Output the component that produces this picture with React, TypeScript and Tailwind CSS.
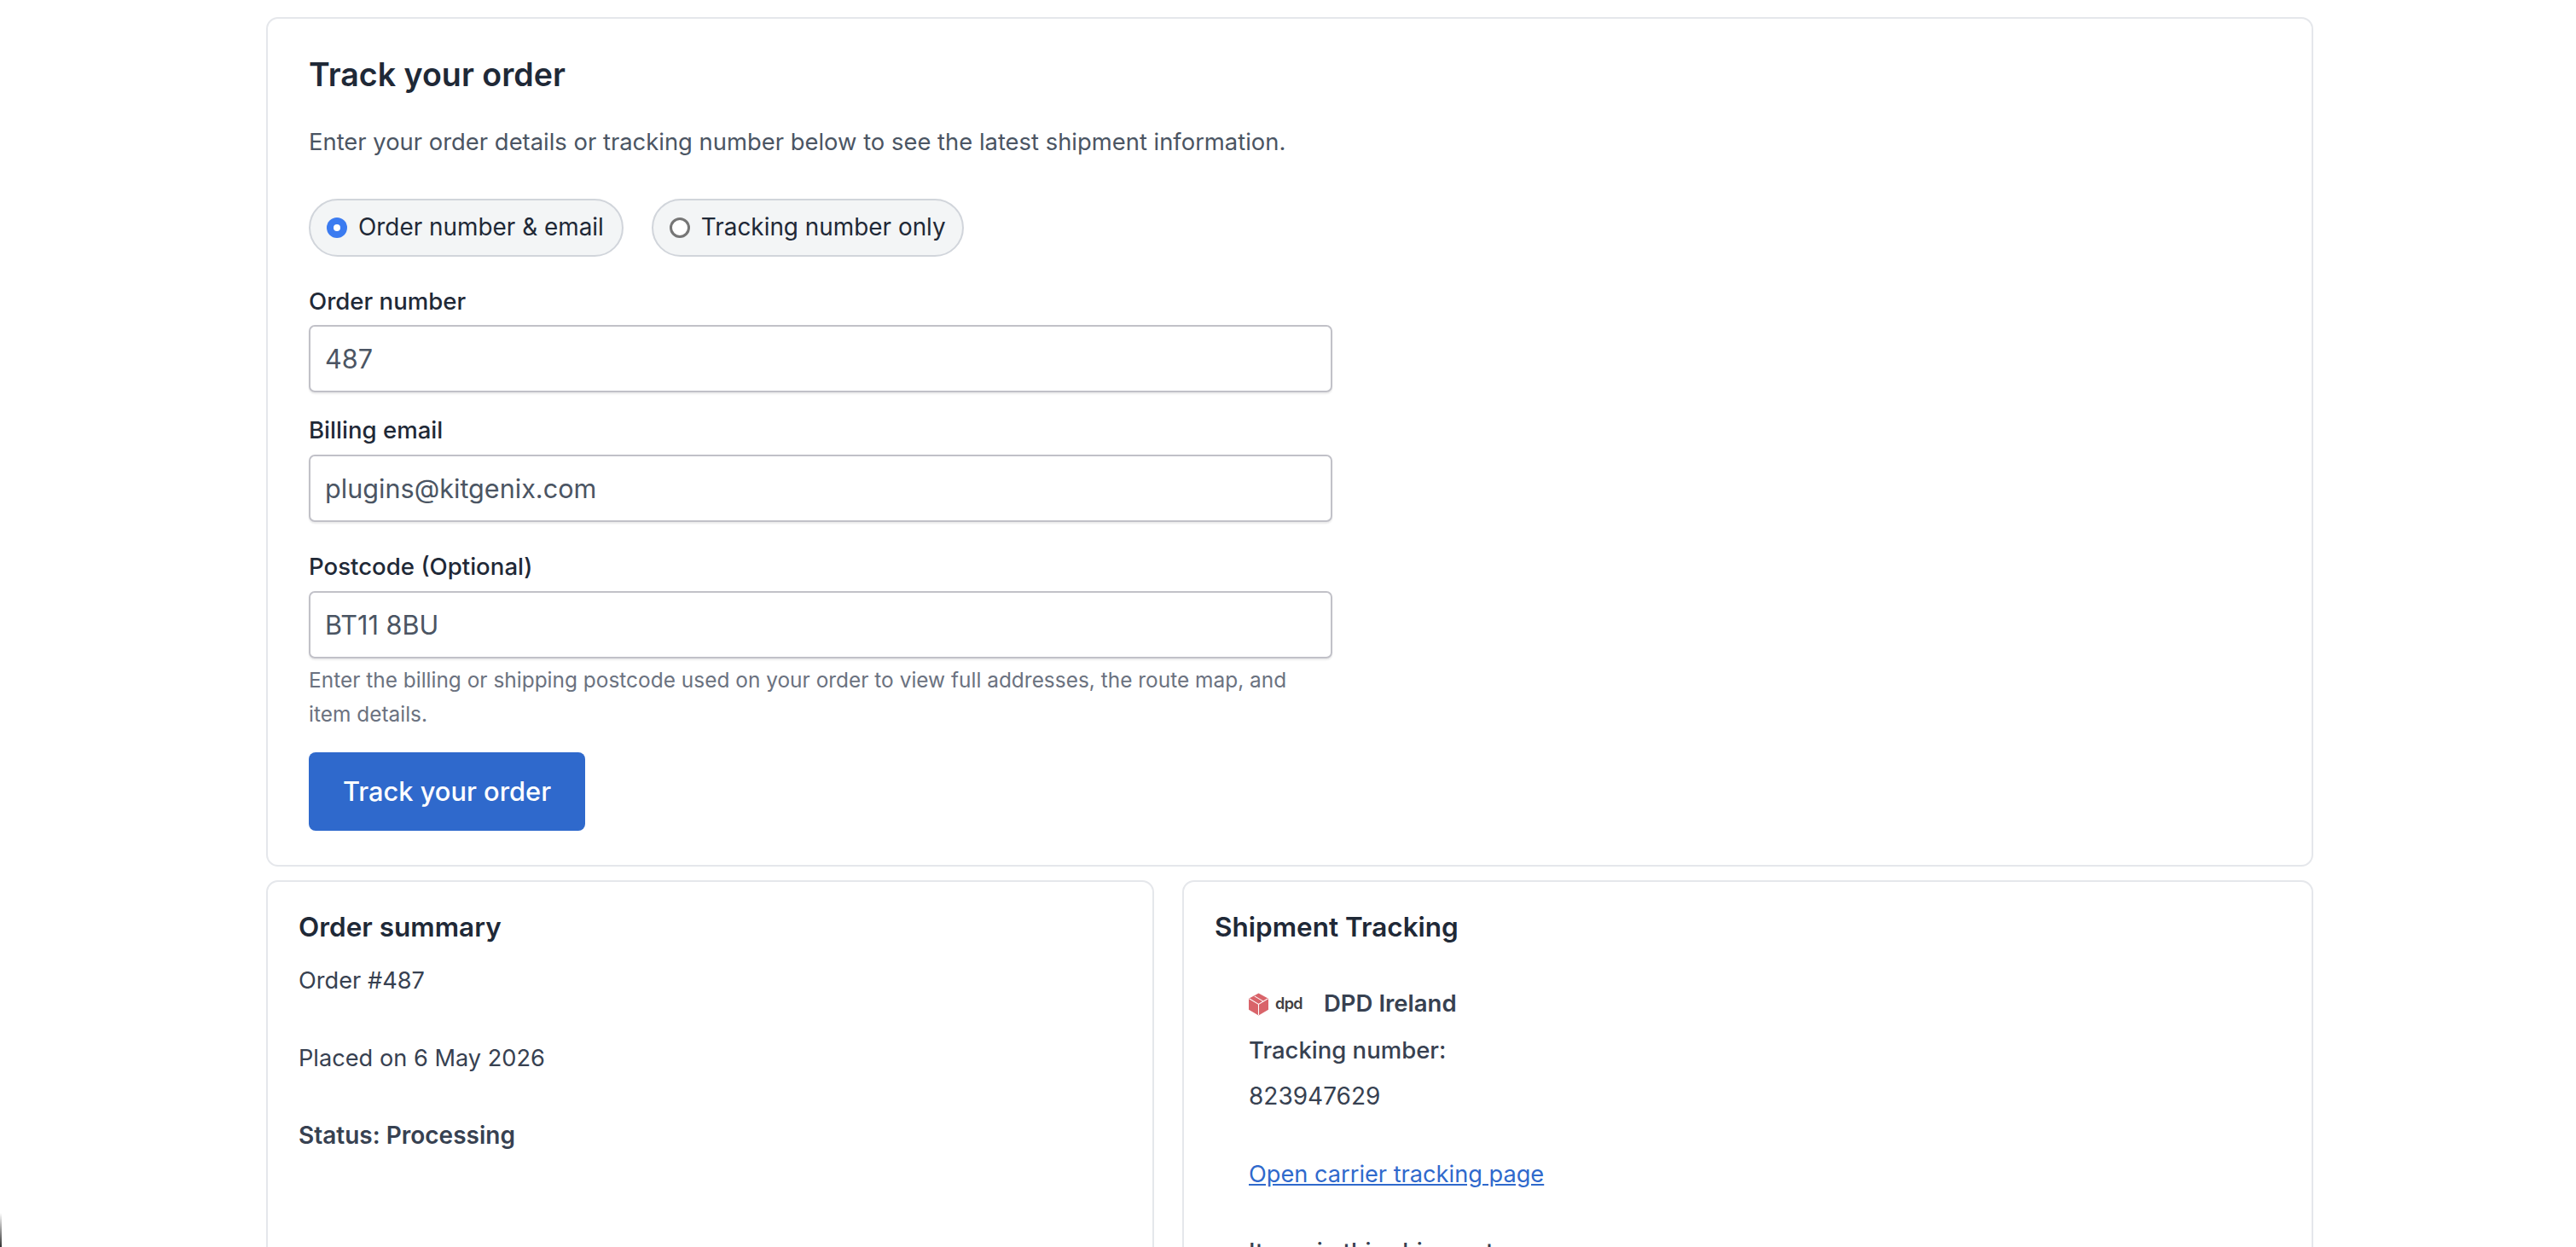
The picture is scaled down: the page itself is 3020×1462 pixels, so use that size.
const sans = "font-['Inter',sans-serif]";

const RadioPill = ({ label, checked, right }: { label: string; checked?: boolean; right: string }) => (
  <label className={`${right} flex h-[68px] items-center gap-[13px] rounded-full border-2 border-[#d1d5db] bg-[#f3f5f6] pl-[19px] text-[27.9px] text-[#1f2937]`}>
    {checked ? (
      <span className="flex size-[24px] items-center justify-center rounded-full bg-[#3b7bf0]">
        <span className="size-[8px] rounded-full bg-white" />
      </span>
    ) : (
      <span className="size-[24px] rounded-full border-[3px] border-[#767676] bg-white" />
    )}
    {label}
  </label>
);

const Field = ({ label, value, gap }: { label: string; value: string; gap: string }) => (
  <div className="flex flex-col">
    <span className="text-[27.6px] font-medium leading-[40px] text-[#1f2937]">{label}</span>
    <div className={`${gap} flex h-[79px] w-[1200px] items-center rounded-[7px] border-2 border-[#c1c1c8] bg-white px-[17px] text-[30.6px] text-[#4b5563] shadow-[0_2px_2px_rgba(0,0,0,0.08)]`}>
      {value}
    </div>
  </div>
);

const DpdLogo = () => (
  <span className="flex w-[62px] items-center gap-[8px]">
    <svg viewBox="0 0 24 27" className="h-[27px] w-[23px] shrink-0">
      <path d="M12 0 24 6.5V20L12 27 0 20V6.5Z" fill="#d9646a" />
      <path d="M0.5 6.5 12 13.5 23.5 6.5M12 13.5V26.5M7 3.5 18 10" fill="none" stroke="#fff" strokeWidth="1.1" />
    </svg>
    <span className="text-[18px] font-semibold leading-none tracking-[-0.6px] text-[#414042]">dpd</span>
  </span>
);

export default function App() {
  return (
    <div className={`${sans} relative h-[1462px] overflow-hidden bg-white`}>
      <div className="absolute bottom-0 left-0 h-[40px] w-[2px] bg-gradient-to-b from-transparent to-[#333]" />
      <div className="ml-[312px] flex w-[2400px] flex-col gap-[16px] pt-[20px]">
        <section className="h-[996px] rounded-[14px] border-2 border-[#e5e7eb] px-[48px] pt-[40px]">
          <h1 className="text-[37.6px] font-semibold leading-[52px] text-[#1f2937]">Track your order</h1>
          <p className="mt-[32px] text-[27.4px] leading-[40px] text-[#4b5563]">
            Enter your order details or tracking number below to see the latest shipment information.
          </p>
          <div className="mt-[47px] flex gap-[33px]">
            <RadioPill label="Order number &amp; email" checked right="pr-[21px]" />
            <RadioPill label="Tracking number only" right="pr-[19px]" />
          </div>
          <div className="mt-[32px] flex flex-col gap-[24px]">
            <Field label="Order number" value="487" gap="mt-[8px]" />
            <Field label="Billing email" value="plugins@kitgenix.com" gap="mt-[9px]" />
          </div>
          <div className="mt-[32px]">
            <Field label="Postcode (Optional)" value="BT11 8BU" gap="mt-[9px]" />
          </div>
          <p className="mt-[5px] w-[1200px] text-[24.45px] leading-[40px] text-[#6b7280]">
            Enter the billing or shipping postcode used on your order to view full addresses, the route map, and item details.
          </p>
          <button className="mt-[25px] flex h-[92px] w-[324px] items-center justify-center rounded-[8px] bg-[#2f69cc] text-[30.8px] font-medium text-white">
            Track your order
          </button>
        </section>
        <div className="flex gap-[33px]">
          <section className="h-[500px] w-[1041px] shrink-0 rounded-[14px] border-2 border-[#e5e7eb] pl-[36px] pt-[31px]">
            <h2 className="text-[31.5px] font-semibold leading-[44px] text-[#1f2937]">Order summary</h2>
            <p className="mt-[21px] text-[27.2px] leading-[40px] text-[#374151]">Order #487</p>
            <p className="mt-[51px] text-[27.2px] leading-[40px] text-[#374151]">Placed on 6 May 2026</p>
            <p className="mt-[50px] text-[28px] font-semibold leading-[40px] text-[#374151]">Status: Processing</p>
          </section>
          <section className="h-[500px] flex-1 rounded-[14px] border-2 border-[#e5e7eb] pl-[36px] pt-[31px]">
            <h2 className="text-[31.5px] font-semibold leading-[44px] text-[#1f2937]">Shipment Tracking</h2>
            <div className="mt-[48px] pl-[40px] text-[27.5px] text-[#374151]">
              <div className="flex h-[40px] items-center gap-[26px]">
                <DpdLogo />
                <span className="font-semibold">DPD Ireland</span>
              </div>
              <p className="mt-[14px] font-medium leading-[40px]">Tracking number:</p>
              <p className="mt-[14px] text-[28px] leading-[40px]">823947629</p>
              <a className="mt-[52px] block text-[27.2px] leading-[40px] text-[#2f69cc] underline">Open carrier tracking page</a>
              <p className="mt-[50px] font-medium leading-[40px]">Items in this shipment</p>
            </div>
          </section>
        </div>
      </div>
    </div>
  );
}
